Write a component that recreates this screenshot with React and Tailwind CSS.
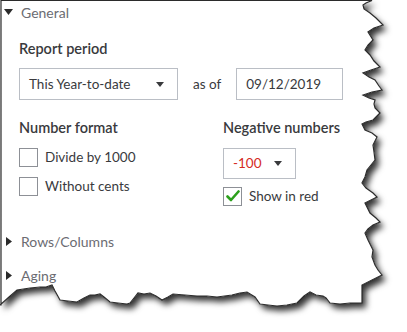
const EDGE =
  "M1,0.5 L372,0.5 L366,3 L363,5 L364,9 L370,13 L376,18 L383,25 L374,28 L368,32 L373,40 L368,45 L365,50 L370,55 L374,61 L380,67 L371,70 L363,73 L369,77 L375,80 L379,86 L382,90 L372,92 L363,95 L369,98 L375,100 L374,104 L375,108 L380,113 L376,117 L373,120 L366,122 L362,124 L365,130 L372,133 L377,137 L373,145 L374,152 L375,160 L371,165 L367,170 L365,177 L362,183 L366,188 L373,193 L377,197 L371,200 L365,203 L370,213 L376,218 L380,222 L373,225 L368,229 L365,233 L368,240 L373,250 L372,257 L375,265 L378,270 L382,275 L372,280 L362,285 L362,294 L362,303 L350,303 L340,304 L330,303 L326,298 L323,296 L316,295 L310,292 L304,296 L297,303 L287,305 L277,306 L268,305 L260,304 L255,297 L247,292 L240,293 L232,295 L217,297 L207,296 L197,296 L185,295 L173,294 L168,297 L162,300 L156,296 L150,293 L144,294 L138,293 L134,298 L130,303 L127,304 L118,303 L110,302 L104,297 L100,294 L95,295 L90,295 L84,298 L77,302 L68,301 L60,300 L55,291 L52,285 L46,287 L40,287 L30,288 L17,290 L9,297 L0,305 L1,305 Z";

function Torn() {
  return (
    <svg className="absolute inset-0" width="407" height="332" viewBox="0 0 407 332">
      <defs>
        <filter id="shadow" x="-10%" y="-10%" width="130%" height="130%">
          <feDropShadow dx="4" dy="5" stdDeviation="3" floodColor="#000" floodOpacity="0.8" />
        </filter>
      </defs>
      <path d={EDGE} fill="#fff" filter="url(#shadow)" />
      <path d={EDGE} fill="#fff" stroke="#2b2b2b" strokeWidth="1.2" strokeLinejoin="miter" />
    </svg>
  );
}

function Caret() {
  return (
    <svg width="8" height="5" viewBox="0 0 8 5" className="shrink-0">
      <path d="M0 0 L8 0 L4 5 Z" fill="#393a3d" />
    </svg>
  );
}

function SectionToggle({ open, label }) {
  return (
    <div className="flex items-center h-5 pl-[4px] gap-[8px]">
      {open ? (
        <svg width="9" height="6" viewBox="0 0 9 6"><path d="M0 0 L9 0 L4.5 6 Z" fill="#2b2b2b" /></svg>
      ) : (
        <svg width="6" height="9" viewBox="0 0 6 9" className="ml-[2px] mr-[1px]"><path d="M0 0 L6 4.5 L0 9 Z" fill="#2b2b2b" /></svg>
      )}
      <span className="text-[14px] text-[#6b6c72]">{label}</span>
    </div>
  );
}

function Checkbox({ checked, label }) {
  return (
    <div className="flex items-center gap-[7px] h-5">
      <div className="w-[19px] h-[19px] border border-[#8d9096] bg-white flex items-center justify-center">
        {checked && (
          <svg width="14" height="12" viewBox="0 0 14 12">
            <path d="M1.5 6.5 L5 10 L12.5 1.5" fill="none" stroke="#2ca01c" strokeWidth="2.6" strokeLinecap="round" strokeLinejoin="round" />
          </svg>
        )}
      </div>
      <span className="text-[13.5px] text-[#393a3d]">{label}</span>
    </div>
  );
}

export default function App() {
  return (
    <div className="relative w-[407px] h-[332px] bg-white overflow-hidden font-['Lato',sans-serif]">
      <Torn />
      <div className="relative pt-[2px]">
        <SectionToggle open label="General" />

        <div className="pl-[19px] mt-[17px]">
          <div className="text-[14.5px] font-semibold text-[#393a3d] h-5 leading-5">Report period</div>
          <div className="flex items-center mt-[9px]">
            <div className="w-[159px] h-[32px] border border-[#babec5] flex items-center justify-between pl-[9px] pr-[13px]">
              <span className="text-[13.5px] text-[#393a3d]">This Year-to-date</span>
              <Caret />
            </div>
            <span className="ml-[15px] text-[13.5px] text-[#393a3d]">as of</span>
            <div className="ml-[15px] w-[107px] h-[32px] border border-[#babec5] flex items-center pl-[9px]">
              <span className="text-[13.5px] text-[#393a3d]">09/12/2019</span>
            </div>
          </div>

          <div className="flex mt-[18px]">
            <div className="w-[204px]">
              <div className="text-[14.5px] font-semibold text-[#393a3d] h-5 leading-5">Number format</div>
              <div className="mt-[9px] flex flex-col gap-[9px]">
                <Checkbox label="Divide by 1000" />
                <Checkbox label="Without cents" />
              </div>
            </div>
            <div>
              <div className="text-[14.5px] font-semibold text-[#393a3d] h-5 leading-5">Negative numbers</div>
              <div className="mt-[10px] w-[73px] h-[31px] border border-[#babec5] flex items-center justify-between pl-[9px] pr-[13px]">
                <span className="text-[13.5px] text-[#d52b1e]">-100</span>
                <Caret />
              </div>
              <div className="mt-[7px]">
                <Checkbox checked label="Show in red" />
              </div>
            </div>
          </div>
        </div>

        <div className="mt-[25px]">
          <SectionToggle label="Rows/Columns" />
        </div>
        <div className="mt-[14px]">
          <SectionToggle label="Aging" />
        </div>
      </div>
    </div>
  );
}
